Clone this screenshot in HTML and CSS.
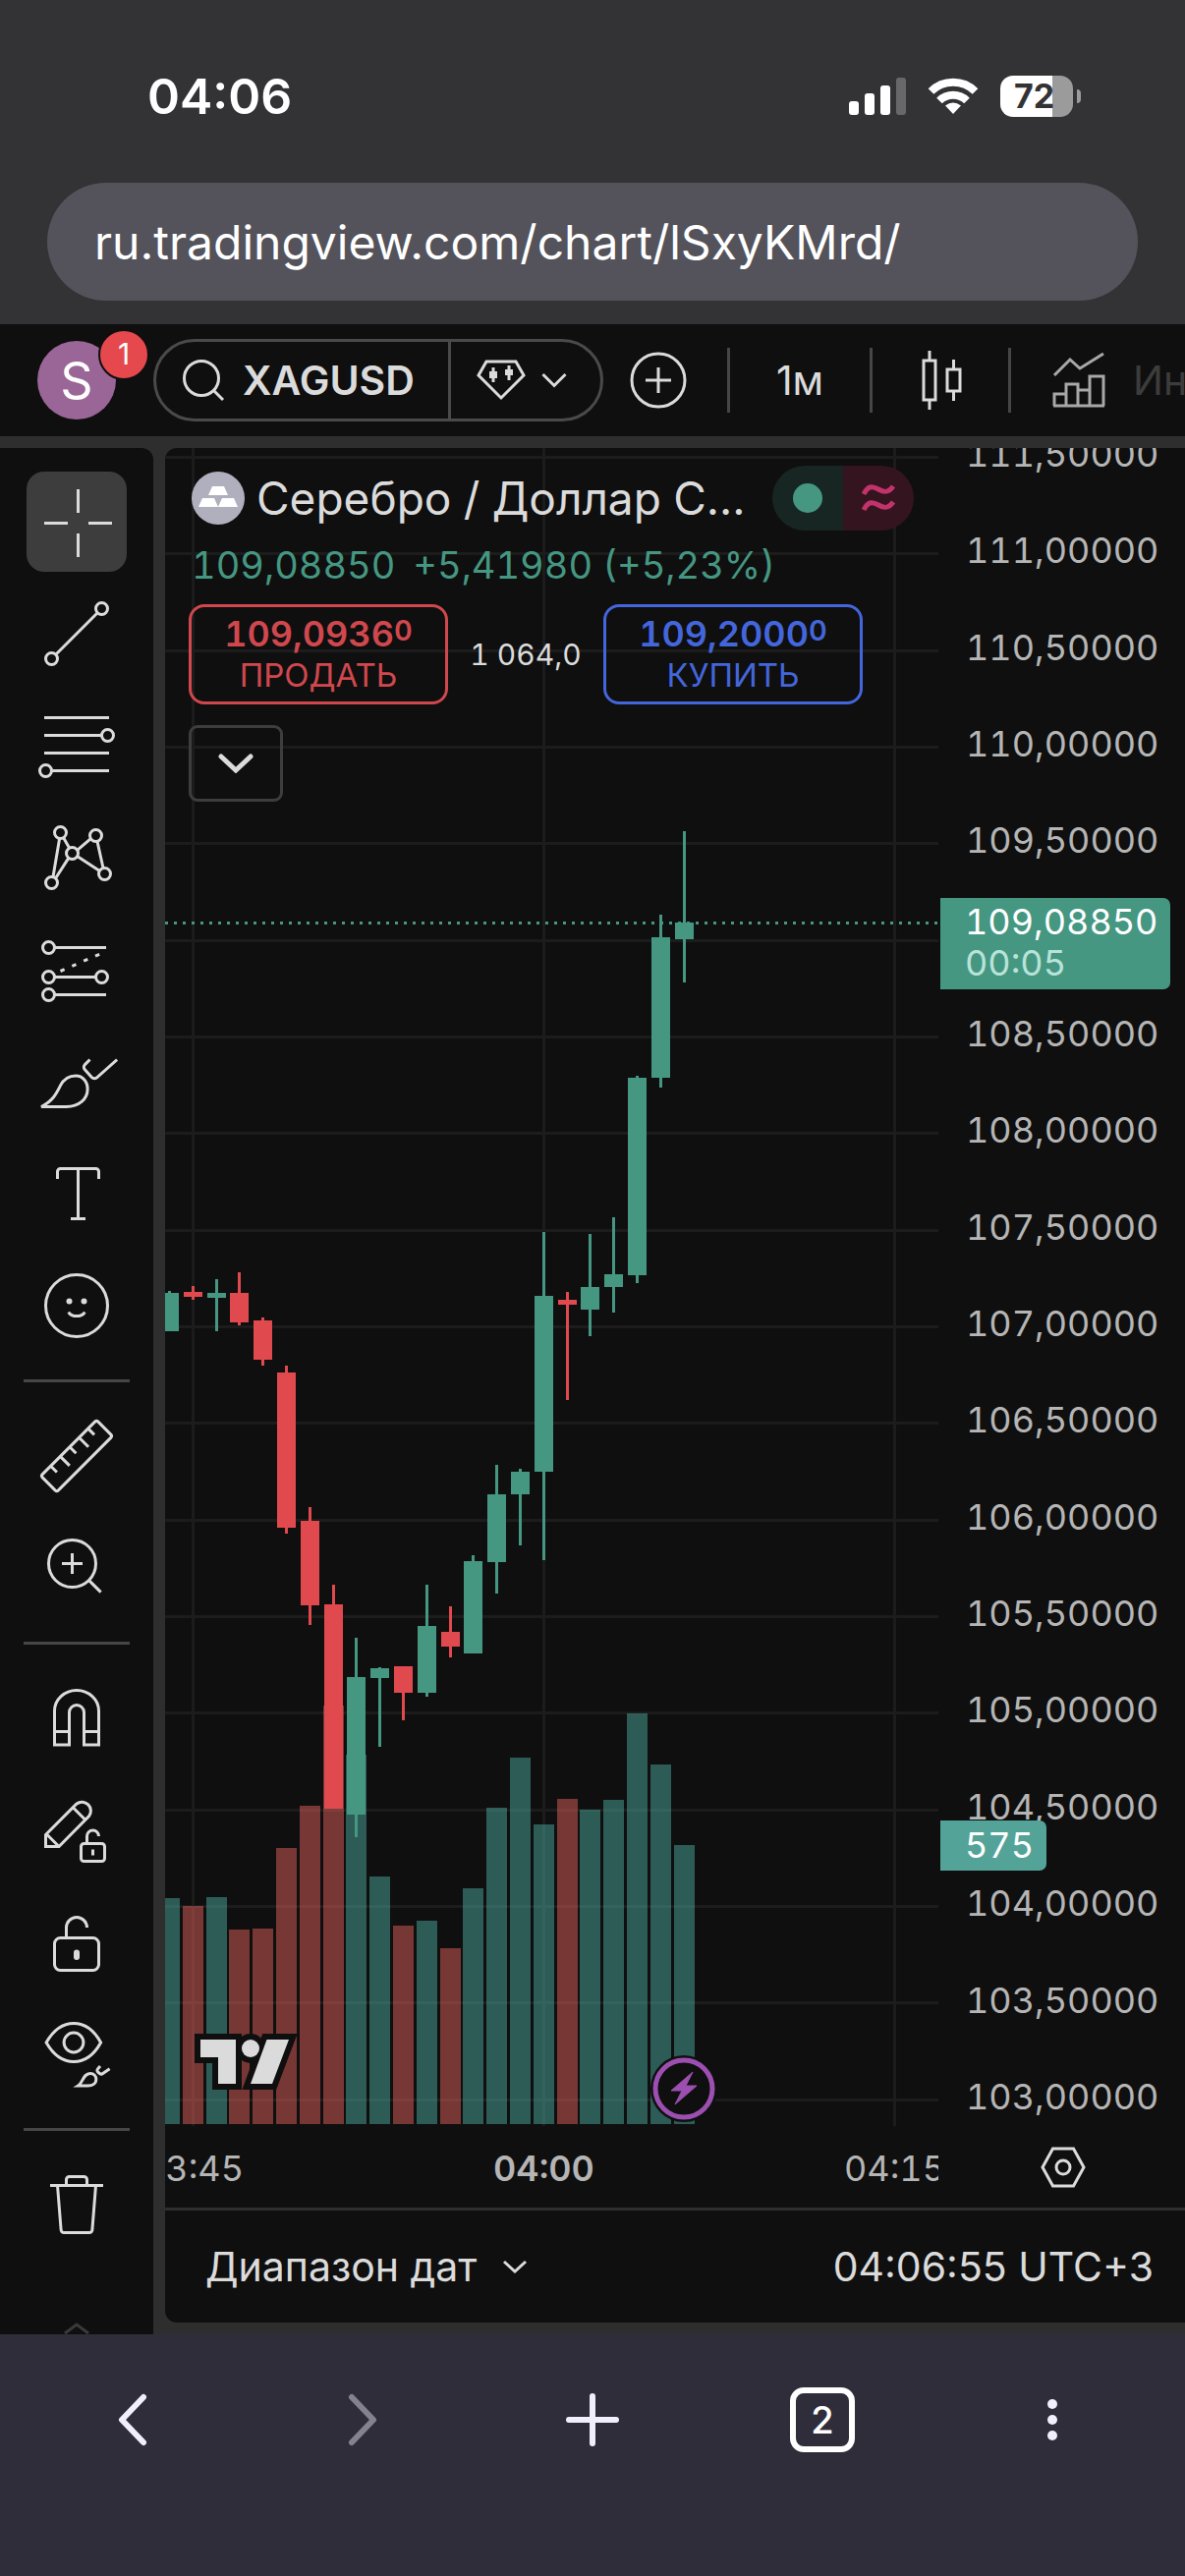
FILE: index.html
```html
<!DOCTYPE html>
<html lang="ru">

<head>
    <meta charset="UTF-8">
    <meta name="viewport" content="width=device-width, initial-scale=1">
    <title>XAGUSD 109,08850</title>
    <link rel="stylesheet" href="styles.css">
</head>

<body>
    <!-- Строка состояния и адрес -->
    <header class="browser-top">
        <div class="status">
            <span class="status-time">04:06</span>
            <div class="status-icons">
                <svg class="signal" viewBox="0 0 58 38" fill="#fff">
                    <rect x="0" y="24" width="10" height="14" rx="3" />
                    <rect x="16" y="16" width="10" height="22" rx="3" />
                    <rect x="32" y="8" width="10" height="30" rx="3" />
                    <rect x="48" y="0" width="10" height="38" rx="3" fill="#68686a" />
                </svg>
                <svg class="wifi" viewBox="0 0 52 38" fill="none" stroke="#fff" stroke-width="8">
                    <path d="M3.500 14a32 32 0 0 1 45 0" />
                    <path d="M12 23.500a20 20 0 0 1 28 0" />
                    <path d="M26 37l-8-8.500q8-6 16 0z" fill="#fff" stroke="none" />
                </svg>
                <div class="battery"><span>72</span></div>
            </div>
        </div>
        <input class="address" type="text" aria-label="Адрес" value="ru.tradingview.com/chart/lSxyKMrd/">
    </header>

    <!-- Верхняя панель -->
    <nav class="toolbar">
        <button class="avatar" aria-label="Профиль">S<span class="badge">1</span></button>
        <div class="symbol">
            <button class="symbol-search">
                <svg width="44" height="44" viewBox="0 0 44 44" class="ico">
                    <circle cx="20" cy="20" r="17.500" />
                    <path d="M32 32l10 10" />
                </svg>
                XAGUSD
            </button>
            <button class="symbol-type" aria-label="Тип">
                <svg width="50" height="42" viewBox="0 0 50 42" class="ico">
                    <path d="M10 2h30l8 14-23 23L2 16z" />
                    <path d="M17 8v15M33 6v15" />
                    <path d="M13 12h8v7h-8zM29 10h8v6h-8z" fill="#dbdbdb" stroke="none" />
                </svg>
                <svg width="26" height="16" viewBox="0 0 26 16" class="ico">
                    <path d="M1.500 2L13 13.500 24.500 2" />
                </svg>
            </button>
        </div>
        <button class="tool-plus" aria-label="Сравнить">
            <svg width="58" height="58" viewBox="0 0 58 58" class="ico">
                <circle cx="29" cy="29" r="27" />
                <path d="M29 16v26M16 29h26" />
            </svg>
        </button>
        <span class="bar"></span>
        <button class="tool-interval">1м</button>
        <span class="bar"></span>
        <button class="tool-candles" aria-label="Свечи">
            <svg width="42" height="60" viewBox="0 0 42 60" class="ico">
                <path d="M2 10h12v40H2zM8 0v10M8 50v10M26 19h13v22H26zM32.500 9v10M32.500 41v10" />
            </svg>
        </button>
        <span class="bar"></span>
        <button class="tool-ind">
            <svg width="54" height="56" viewBox="0 0 54 56" class="ico">
                <path d="M2 23L18 7l10 9L52 1" />
                <path d="M2 54V42h12v12M14 54V32h12v22M26 38h12v16M38 54V24h14v30M1 54h52" />
            </svg>
            Индикаторы
        </button>
    </nav>

    <div class="workspace">
        <!-- Инструменты рисования, иконки в сетке 28x28 -->
        <aside class="sidebar">
            <button class="active" aria-label="Перекрестие"><svg viewBox="0 0 28 28"><path d="M14.500 3v8M14.500 18v8M3 14.500h8M18 14.500h8" /></svg></button>
            <button aria-label="Линия"><svg viewBox="0 0 28 28"><circle cx="22.500" cy="5.500" r="2" /><circle cx="5.500" cy="22.500" r="2" /><path d="M7 21L21 7" /></svg></button>
            <button aria-label="Фибоначчи"><svg viewBox="0 0 28 28"><path d="M3 4.500h22M3 10.500h19.500M3 16.500h22M5.500 22.500H25" /><circle cx="24.500" cy="10.500" r="2" /><circle cx="3.500" cy="22.500" r="2" /></svg></button>
            <button aria-label="Паттерны"><svg viewBox="0 0 28 28"><circle cx="8.500" cy="5.500" r="2" /><circle cx="12.500" cy="12.500" r="2" /><circle cx="20.500" cy="6.500" r="2" /><circle cx="23.500" cy="19.500" r="2" /><circle cx="5.500" cy="22.500" r="2" /><path d="M8.200 7.500L6 20.500M9.500 7.200l2 3.500M14.300 11.400l4.400-3.800M21 8.500l2 9M14.300 13.600l7.400 4.800M11.200 14.200L6.900 20.900" /></svg></button>
            <button aria-label="Прогноз"><svg viewBox="0 0 28 28"><circle cx="4.500" cy="6.500" r="2" /><circle cx="4.500" cy="16.500" r="2" /><circle cx="4.500" cy="22.500" r="2" /><circle cx="22.500" cy="16.500" r="2" /><path d="M6.500 6.500H24M6.500 16.500h14M6.500 22.500H24" /><path d="M8.500 14.500l15-6.500" stroke-dasharray="1.500 2.800" /></svg></button>
            <button aria-label="Кисть"><svg viewBox="0 0 28 28"><path d="M2 22.500c4-2 5.200-4.600 6.500-7.200C9.700 13 11.600 12 13.700 12c2.400 0 4 2 4 4.500 0 3.500-3 6-7.200 6z" /><path d="M18.500 6.500l-1.700 1.700a1.200 1.200 0 0 0 0 1.700l2.300 2.600a1.300 1.300 0 0 0 1.900 0l6.700-6" /></svg></button>
            <button aria-label="Текст"><svg viewBox="0 0 28 28"><path d="M7.500 9V6.500a1 1 0 0 1 1-1h12a1 1 0 0 1 1 1V9M14.500 5.500v17M12 22.500h5" /></svg></button>
            <button aria-label="Эмодзи"><svg viewBox="0 0 28 28"><circle cx="14" cy="14" r="10.500" /><path d="M11.200 16.200a3.200 2.600 0 0 0 5.600 0" /><circle cx="11.500" cy="12.500" r="1" class="fill" /><circle cx="16.500" cy="12.500" r="1" class="fill" /></svg></button>
            <hr>
            <button aria-label="Линейка"><svg viewBox="0 0 28 28"><path d="M2.400 20.200a.8.8 0 0 0 0 1.100l4.300 4.300a.8.8 0 0 0 1.100 0L25.600 7.800a.8.8 0 0 0 0-1.100l-4.300-4.300a.8.8 0 0 0-1.100 0zM5.300 17.500l2 2M8.600 14.300l3 3M11.800 11.100l2 2M15 7.900l3 3M18 4.800l2 2" /></svg></button>
            <button aria-label="Увеличить"><svg viewBox="0 0 28 28"><circle cx="12.500" cy="12.500" r="8" /><path d="M12.500 9v7M9 12.500h7M18.200 18.200l4 4" /></svg></button>
            <hr>
            <button aria-label="Магнит"><svg viewBox="0 0 28 28"><path d="M6.500 23V11.500a7.500 7 0 0 1 15 0V23h-5V12a2.500 2.500 0 0 0-5 0v11zM6.500 18.500h5M16.500 18.500h5" /></svg></button>
            <button aria-label="Рисование"><svg viewBox="0 0 28 28"><path d="M3.500 15.500L14 5a3 3 0 0 1 4.200 4.200L8 19.500H3.500zM4 15.500l4 4M13 6.500l4 4" /><rect x="15.500" y="18.500" width="8" height="6" rx="1" /><path d="M17.500 18.500V16a2 2 0 0 1 4 0" /><path d="M19.500 20.500v2" /></svg></button>
            <button aria-label="Замок"><svg viewBox="0 0 28 28"><rect x="6.500" y="12.500" width="15" height="11" rx="2" /><path d="M10.500 12.500V9a3.500 3.500 0 0 1 7 0" /><rect x="13" y="16.500" width="2" height="3.500" rx="1" class="fill" /></svg></button>
            <button aria-label="Скрыть"><svg viewBox="0 0 28 28"><path d="M3.700 10C6 6 9 3.500 13 3.500s7 2.500 9.200 6.500c-2.200 4-5.200 6.500-9.200 6.500S6 14 3.700 10z" /><circle cx="13" cy="10" r="3.300" /><path d="M14.500 24.700c1.600-1 1.700-4.200 4.100-4.200 1.300 0 2 .9 2 2 0 1.400-1.200 2.200-2.800 2.200zM22 18l-.8.900a.8.800 0 0 0 .1 1.200l.5.400a.9.900 0 0 0 1.100 0l2.300-1.600" /></svg></button>
            <hr>
            <button aria-label="Удалить"><svg viewBox="0 0 28 28"><path d="M5 7.500h18M10.500 7.500v-2a1 1 0 0 1 1-1h5a1 1 0 0 1 1 1v2M7.500 7.500l1.200 15a1 1 0 0 0 1 1h8.600a1 1 0 0 0 1-1l1.200-15" /></svg></button>
            <svg class="more" viewBox="0 0 26 12"><path d="M1 11L13 2l12 9" /></svg>
        </aside>

        <main class="chart">
            <div class="chart-main">
                <div class="plot">
                    <svg id="canvas" viewBox="0 0 789 1708" preserveAspectRatio="xMinYMin slice"></svg>

                    <section class="legend">
                        <div class="title-row">
                            <svg class="silver" viewBox="0 0 54 54">
                                <circle cx="27" cy="27" r="27" fill="#b0afbd" />
                                <path d="M21 15h12l4 9H17zM11 27h12l4 9H7zM31 27h12l4 9H27z" fill="#fff" />
                            </svg>
                            <h1>Серебро / Доллар США</h1>
                            <div class="state">
                                <span class="state-open"><i></i></span>
                                <span class="state-delay">
                                    <svg width="34" height="30" viewBox="0 0 34 30">
                                        <path d="M2 11C6 3 10 2 17 6s11 3 15-3M2 27c4-8 8-9 15-5s11 3 15-3" />
                                    </svg>
                                </span>
                            </div>
                        </div>
                        <div class="quote"><span>109,08850</span><span>+5,41980 (+5,23%)</span></div>
                        <div class="trade-row">
                            <button class="trade sell"><b>109,0936<small>0</small></b>ПРОДАТЬ</button>
                            <span class="spread">1 064,0</span>
                            <button class="trade buy"><b>109,2000<small>0</small></b>КУПИТЬ</button>
                        </div>
                        <button class="collapse" aria-label="Свернуть">
                            <svg width="36" height="20" viewBox="0 0 36 20"><path d="M3 3l15 14L33 3" /></svg>
                        </button>
                    </section>
                </div>

                <div class="price-axis">
                    <div class="prices" id="prices"></div>
                    <div class="tag tag-price">109,08850<br><span>00:05</span></div>
                    <div class="tag tag-volume">575</div>
                </div>
            </div>

            <div class="time-row">
                <div class="times"><span>03:45</span><b>04:00</b><span>04:15</span></div>
                <button class="settings" aria-label="Настройки">
                    <svg width="46" height="42" viewBox="0 0 46 42" class="ico">
                        <path d="M12.500 2h21L44 21 33.500 40h-21L2 21z" />
                        <circle cx="23" cy="21" r="7" />
                    </svg>
                </button>
            </div>

            <footer class="chart-footer">
                <button class="range">Диапазон дат
                    <svg width="26" height="14" viewBox="0 0 26 14" class="ico"><path d="M2 2l11 10L24 2" /></svg>
                </button>
                <button>04:06:55 UTC+3</button>
            </footer>
        </main>
    </div>

    <!-- Нижняя панель браузера -->
    <nav class="browser-nav">
        <button aria-label="Назад"><svg width="58" height="58" viewBox="0 0 58 58"><path d="M40 6L18 29l22 23" /></svg></button>
        <button aria-label="Вперёд" disabled><svg width="58" height="58" viewBox="0 0 58 58"><path d="M18 6l22 23-22 23" /></svg></button>
        <button aria-label="Новая вкладка"><svg width="58" height="58" viewBox="0 0 58 58"><path d="M29 5v48M5 29h48" /></svg></button>
        <button><span class="tabs">2</span></button>
        <button aria-label="Меню"><svg width="58" height="58" viewBox="0 0 58 58" class="dots"><circle cx="29" cy="13" r="5" /><circle cx="29" cy="29" r="5" /><circle cx="29" cy="45" r="5" /></svg></button>
    </nav>

    <script src="script.js"></script>
</body>

</html>
```

FILE: styles.css
```css
* {
    box-sizing: border-box;
}

body {
    margin: 0;
    min-height: 100vh;
    display: flex;
    flex-direction: column;
    background: #2e2e2e;
    color: #dbdbdb;
    font-family: Inter, "Liberation Sans", sans-serif;
    overflow-x: hidden;
}

button {
    padding: 0;
    border: 0;
    background: none;
    color: inherit;
    font: inherit;
    cursor: pointer;
}

svg {
    display: block;
    flex-shrink: 0;
}

.ico {
    fill: none;
    stroke: #dbdbdb;
    stroke-width: 3;
}

/* Верх браузера */
.browser-top {
    height: 330px;
    padding: 64px 48px 24px;
    display: flex;
    flex-direction: column;
    justify-content: space-between;
    background: #333335;
    color: #fff;
}

.status {
    display: flex;
    justify-content: space-between;
    align-items: center;
    padding: 0 58px 0 102px;
    height: 68px;
}

.status-time {
    font-size: 50px;
    font-weight: 600;
}

.status-icons {
    display: flex;
    align-items: center;
    gap: 22px;
}

.signal {
    width: 58px;
    height: 38px;
}

.wifi {
    width: 52px;
    height: 38px;
}

.battery {
    position: relative;
    width: 74px;
    height: 42px;
    margin-right: 8px;
    padding-left: 14px;
    border-radius: 13px;
    background: linear-gradient(to right, #fff 72%, #9b9b9c 72%);
    color: #333335;
    font-size: 34px;
    font-weight: 700;
    line-height: 42px;
}

.battery::after {
    content: "";
    position: absolute;
    right: -8px;
    top: 14px;
    width: 4px;
    height: 14px;
    border-radius: 0 4px 4px 0;
    background: #9b9b9c;
}

.address {
    width: 100%;
    height: 120px;
    padding: 0 48px;
    border: 0;
    border-radius: 60px;
    background: #54535b;
    color: #fff;
    font: 400 48px Inter, "Liberation Sans", sans-serif;
}

/* Панель графика */
.toolbar {
    display: flex;
    align-items: center;
    height: 114px;
    padding-left: 38px;
    background: #0f0f0f;
    overflow: hidden;
    white-space: nowrap;
    font-size: 41px;
}

.toolbar > * {
    flex-shrink: 0;
}

.avatar {
    position: relative;
    width: 80px;
    height: 80px;
    border-radius: 50%;
    background: #9a6697;
    color: #fff;
    font-size: 52px;
}

.badge {
    position: absolute;
    top: -12px;
    right: -34px;
    width: 52px;
    height: 52px;
    border: 2px solid #0f0f0f;
    border-radius: 50%;
    background: #e5484d;
    font-size: 30px;
    line-height: 46px;
}

.symbol {
    display: flex;
    width: 458px;
    height: 84px;
    margin-left: 38px;
    border: 3px solid #4a4a4a;
    border-radius: 42px;
}

.symbol-search {
    display: flex;
    align-items: center;
    gap: 18px;
    width: 300px;
    padding-left: 26px;
    border-right: 3px solid #4a4a4a;
    font-weight: 600;
}

.symbol-type {
    display: flex;
    align-items: center;
    gap: 16px;
    padding-left: 26px;
}

.tool-plus {
    margin: 0 41px 0 27px;
}

.bar {
    width: 3px;
    height: 66px;
    background: #464646;
}

.tool-interval {
    width: 142px;
}

.tool-candles {
    padding: 0 46px 0 50px;
}

.tool-ind {
    display: flex;
    align-items: center;
    gap: 28px;
    padding-left: 42px;
    color: #3c3c3c;
}

.tool-ind .ico {
    stroke: #a8a8a8;
}

/* Рабочая область */
.workspace {
    flex: 1;
    display: flex;
    gap: 12px;
    padding-top: 12px;
}

.sidebar {
    display: flex;
    flex-direction: column;
    align-items: center;
    gap: 12px;
    width: 156px;
    padding-top: 24px;
    border-radius: 0 12px 0 0;
    background: #0f0f0f;
}

.sidebar button {
    display: grid;
    place-items: center;
    width: 102px;
    height: 102px;
    border-radius: 18px;
}

.sidebar .active {
    background: #3d3d3d;
}

.sidebar button svg {
    width: 84px;
    height: 84px;
    fill: none;
    stroke: #dbdbdb;
}

.sidebar .fill {
    fill: #dbdbdb;
    stroke: none;
}

.sidebar hr {
    width: 108px;
    height: 3px;
    margin: 12px 0;
    border: 0;
    background: #464646;
}

.more {
    width: 26px;
    height: 12px;
    margin-top: auto;
    fill: none;
    stroke: #3a3a3a;
    stroke-width: 3;
}

.chart {
    flex: 1;
    min-width: 0;
    display: flex;
    flex-direction: column;
    margin-bottom: 12px;
    border-radius: 12px 0 0 12px;
    background: #0f0f0f;
    overflow: hidden;
}

.chart-main {
    flex: 1;
    display: flex;
}

.plot {
    flex: 1;
    position: relative;
    overflow: hidden;
}

#canvas {
    position: absolute;
    width: 100%;
    height: 100%;
}

/* Легенда поверх графика */
.legend {
    position: absolute;
    top: 18px;
    left: 24px;
    right: 24px;
    font-variant-numeric: tabular-nums;
}

.title-row {
    display: flex;
    align-items: center;
    height: 66px;
    padding-left: 3px;
}

.silver {
    width: 54px;
    height: 54px;
}

h1 {
    width: 504px;
    margin: 0 21px 0 12px;
    font-size: 46px;
    font-weight: 400;
    overflow: hidden;
    text-overflow: ellipsis;
    white-space: nowrap;
}

.state {
    display: flex;
    width: 144px;
    height: 66px;
    border-radius: 33px;
    overflow: hidden;
}

.state span {
    flex: 1;
    display: grid;
    place-items: center;
}

.state-open {
    background: #172622;
}

.state-open i {
    width: 30px;
    height: 30px;
    border-radius: 50%;
    background: #459782;
}

.state-delay {
    background: #34141f;
}

.state-delay path {
    fill: none;
    stroke: #c2336b;
    stroke-width: 5;
}

.quote {
    display: flex;
    gap: 18px;
    margin: 12px 0 16px 3px;
    color: #459782;
    font-size: 38px;
    line-height: 47px;
}

.trade-row {
    display: flex;
    align-items: center;
}

.trade {
    width: 264px;
    height: 102px;
    border: 3px solid;
    border-radius: 16px;
    font-size: 33px;
    line-height: 42px;
}

.trade b {
    display: block;
    font-size: 36px;
    font-weight: 600;
}

.trade small {
    font-size: 29px;
    line-height: 0;
    vertical-align: 6px;
}

.sell {
    color: #d0484e;
}

.buy {
    color: #4466dc;
}

.spread {
    width: 158px;
    font-size: 30px;
    text-align: center;
}

.collapse {
    display: grid;
    place-items: center;
    width: 96px;
    height: 78px;
    margin-top: 21px;
    border: 3px solid #3d3d3d;
    border-radius: 9px;
}

.collapse path {
    fill: none;
    stroke: #dbdbdb;
    stroke-width: 5;
    stroke-linecap: round;
}

/* Шкала цен */
.price-axis {
    position: relative;
    width: 249px;
    display: flex;
    color: #b5b5b5;
    font-size: 36px;
    font-variant-numeric: tabular-nums;
    line-height: 36px;
}

.prices {
    display: flex;
    flex-direction: column;
    justify-content: space-between;
    margin: -12px 0 12px 26px;
}

.prices span {
    height: 36px;
}

.tag {
    position: absolute;
    left: 0;
    padding-left: 25px;
    border-radius: 0 7px 7px 0;
    color: #fff;
}

.tag-price {
    top: 458px;
    width: 234px;
    height: 93px;
    padding-top: 3px;
    background: #459782;
    line-height: 42px;
}

.tag-price span {
    color: #b9e3d8;
}

.tag-volume {
    top: 1397px;
    width: 108px;
    height: 51px;
    background: #54a398;
    line-height: 51px;
}

/* Шкала времени */
.time-row {
    display: flex;
    height: 86px;
    border-bottom: 3px solid #2e2e2e;
    color: #b5b5b5;
    font-size: 36px;
    font-variant-numeric: tabular-nums;
    line-height: 86px;
}

.times {
    flex: 1;
    display: flex;
    margin-right: 2px;
    overflow: hidden;
}

.times > * {
    flex: 0 0 357px;
    text-align: center;
}

.times > :first-child {
    margin-left: -150px;
}

.times b {
    font-weight: 600;
}

.settings {
    display: grid;
    place-items: center;
    width: 249px;
}

.chart-footer {
    display: flex;
    justify-content: space-between;
    align-items: center;
    height: 114px;
    padding: 0 32px 0 41px;
    font-size: 41px;
}

.range {
    display: flex;
    align-items: center;
    gap: 26px;
}

/* Низ браузера */
.browser-nav {
    display: grid;
    grid-template-columns: repeat(5, 1fr);
    justify-items: center;
    align-items: start;
    height: 246px;
    padding: 54px 18px 0;
    background: #302d3b;
}

.browser-nav button {
    display: grid;
    place-items: center;
    height: 66px;
}

.browser-nav svg {
    fill: none;
    stroke: #f2effc;
    stroke-width: 6;
    stroke-linecap: round;
    stroke-linejoin: round;
}

.browser-nav button:disabled svg {
    stroke: #85828f;
}

.browser-nav .dots {
    fill: #f2effc;
    stroke: none;
}

.tabs {
    width: 66px;
    height: 66px;
    border: 6px solid #fff;
    border-radius: 14px;
    color: #fff;
    font-size: 38px;
    font-weight: 500;
    line-height: 54px;
}
```

FILE: script.js
```js
const svg = document.getElementById('canvas');
const UP = '#459782';
const DOWN = '#e0494d';
const STEP = 23.8; // шаг между свечами
const BOTTOM = 1706;

// [верх тени, верх тела, низ тела, низ тени, верх объёма, рост]
const candles = [
    [858, 860, 899, 899, 1476, 1],
    [853, 859, 864, 867, 1484, 0],
    [846, 860, 865, 899, 1475, 1],
    [839, 860, 890, 893, 1508, 0],
    [885, 888, 928, 934, 1507, 0],
    [934, 941, 1099, 1105, 1425, 0],
    [1078, 1092, 1178, 1198, 1382, 0],
    [1157, 1177, 1385, 1385, 1280, 0],
    [1211, 1251, 1391, 1414, 1330, 1],
    [1241, 1242, 1252, 1322, 1454, 1],
    [1240, 1240, 1267, 1295, 1504, 0],
    [1157, 1199, 1267, 1271, 1499, 1],
    [1179, 1205, 1220, 1231, 1527, 0],
    [1127, 1133, 1227, 1227, 1466, 1],
    [1035, 1065, 1134, 1166, 1384, 1],
    [1039, 1042, 1065, 1117, 1333, 1],
    [798, 863, 1042, 1132, 1401, 1],
    [859, 867, 872, 969, 1375, 0],
    [800, 854, 877, 904, 1386, 1],
    [783, 841, 854, 880, 1376, 1],
    [639, 641, 842, 850, 1288, 1],
    [475, 498, 641, 651, 1340, 1],
    [390, 483, 500, 544, 1422, 1]
];

function rect(x, y, w, h, fill) {
    return `<rect x="${Math.round(x)}" y="${y}" width="${w}" height="${h}" fill="${fill}"/>`;
}

let out = '';

// Сетка
for (let i = 0; i < 18; i++) {
    out += rect(0, Math.round(8 + i * 98.33), 787, 3, '#1c1c1c');
}
[27, 384, 741].forEach(x => {
    out += rect(x, 0, 3, 1708, '#1c1c1c');
});

// Объёмы
candles.forEach((c, i) => {
    const x = 4.5 + i * STEP;
    out += rect(x - 10.5, c[4], 21, BOTTOM - c[4], c[5] ? 'rgba(75,167,157,.5)' : 'rgba(221,95,91,.5)');
});

// Линия текущей цены
out += `<path d="M0 483.500H787" stroke="${UP}" stroke-width="3" stroke-dasharray="3 6"/>`;

// Свечи
candles.forEach((c, i) => {
    const x = 4.5 + i * STEP;
    const color = c[5] ? UP : DOWN;
    out += rect(x - 1.5, c[0], 3, c[3] - c[0], color);
    out += rect(x - 9.5, c[1], 19, c[2] - c[1], color);
});

// Логотип
const logo = 'M36 1620h36v45H54v-27H36zM103.500 1620H126l-17 45H87z';
out += `<g fill="#0f0f0f" stroke="#0f0f0f" stroke-width="12"><path d="${logo}"/><circle cx="87" cy="1629" r="9"/></g>`;
out += `<g fill="#dbdbdb"><path d="${logo}"/><circle cx="87" cy="1629" r="9"/></g>`;

// Молния
out += '<circle cx="528" cy="1670" r="34" fill="#0f0f0f"/>';
out += '<circle cx="528" cy="1670" r="29" fill="none" stroke="#9c4fb0" stroke-width="5"/>';
out += '<path d="M537 1653l-22 19h11l-7 14 22-19h-11z" fill="#9c4fb0" stroke="#9c4fb0" stroke-width="1"/>';

svg.innerHTML = out;

// Подписи шкалы цен, строку под меткой текущей цены оставляем пустой
const prices = document.getElementById('prices');
for (let p = 111.5; p >= 103; p -= 0.5) {
    const row = document.createElement('span');
    if (p !== 109) {
        row.textContent = p.toFixed(5).replace('.', ',');
    }
    prices.appendChild(row);
}
```
